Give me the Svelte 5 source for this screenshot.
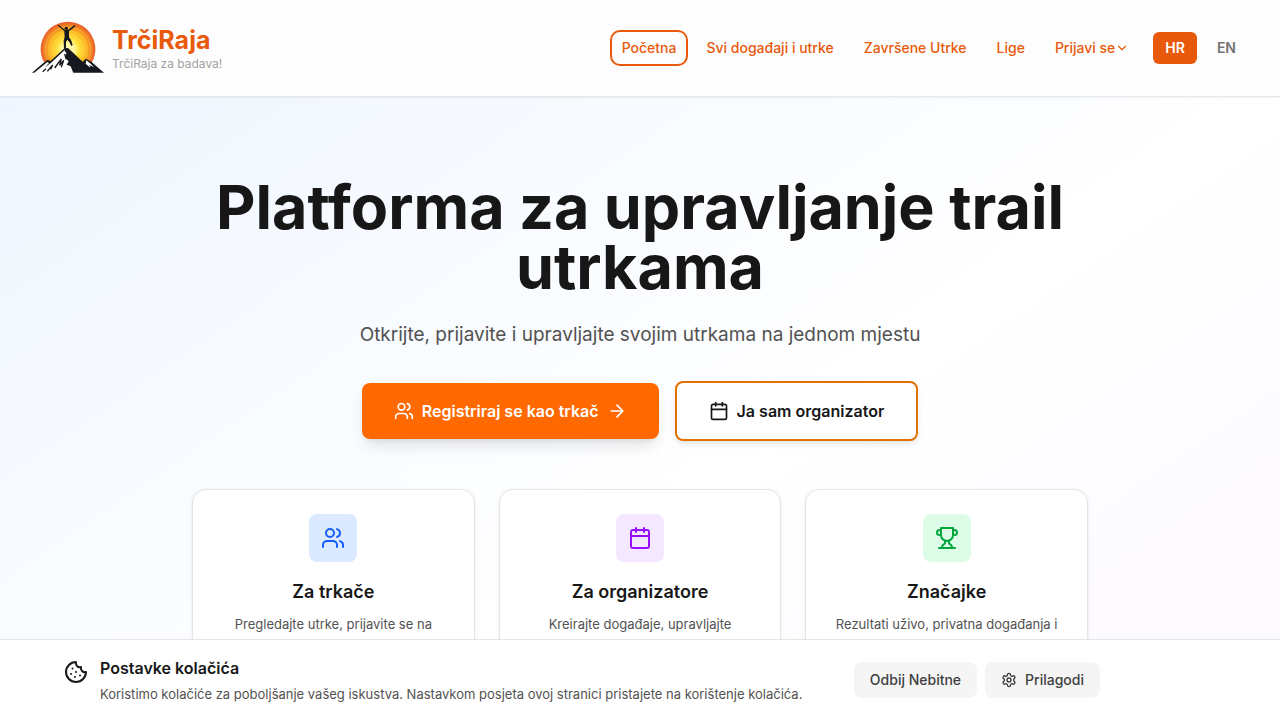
<script>
    const navLinks = ["Svi događaji i utrke", "Završene Utrke", "Lige"];

    const cards = [
        { icon: "users", color: "blue", title: "Za trkače", text: "Pregledajte utrke, prijavite se na" },
        { icon: "calendar", color: "purple", title: "Za organizatore", text: "Kreirajte događaje, upravljajte" },
        { icon: "trophy", color: "green", title: "Značajke", text: "Rezultati uživo, privatna događanja i" }
    ];

    let language = $state("HR");
</script>

{#snippet icon(name, size)}
    <svg class="icon" width={size} height={size} viewBox="0 0 24 24" aria-hidden="true">
        {#if name === "users"}
            <path d="M16 21v-2a4 4 0 0 0-4-4H6a4 4 0 0 0-4 4v2" />
            <circle cx="9" cy="7" r="4" />
            <path d="M22 21v-2a4 4 0 0 0-3-3.87M16 3.13a4 4 0 0 1 0 7.75" />
        {:else if name === "calendar"}
            <path d="M8 2v4M16 2v4M3 10h18" />
            <rect width="18" height="18" x="3" y="4" rx="2" />
        {:else if name === "trophy"}
            <path d="M6 9H4.5a2.5 2.5 0 0 1 0-5H6M18 9h1.5a2.5 2.5 0 0 0 0-5H18M4 22h16" />
            <path d="M10 14.66V17c0 .55-.47.98-.97 1.21C7.85 18.75 7 20.24 7 22M14 14.66V17c0 .55.47.98.97 1.21C16.15 18.75 17 20.24 17 22" />
            <path d="M18 2H6v7a6 6 0 0 0 12 0V2Z" />
        {:else if name === "arrow"}
            <path d="M5 12h14M12 5l7 7-7 7" />
        {:else if name === "chevron"}
            <path d="m6 9 6 6 6-6" />
        {:else if name === "cookie"}
            <path d="M12 2a10 10 0 1 0 10 10 4 4 0 0 1-5-5 4 4 0 0 1-5-5" />
            <path d="M8.5 8.5v.01M16 15.5v.01M12 12v.01M11 17v.01M7 14v.01" />
        {:else if name === "settings"}
            <path d="M12.22 2h-.44a2 2 0 0 0-2 2v.18a2 2 0 0 1-1 1.73l-.43.25a2 2 0 0 1-2 0l-.15-.08a2 2 0 0 0-2.73.73l-.22.38a2 2 0 0 0 .73 2.73l.15.1a2 2 0 0 1 1 1.72v.51a2 2 0 0 1-1 1.74l-.15.09a2 2 0 0 0-.73 2.73l.22.38a2 2 0 0 0 2.73.73l.15-.08a2 2 0 0 1 2 0l.43.25a2 2 0 0 1 1 1.73V20a2 2 0 0 0 2 2h.44a2 2 0 0 0 2-2v-.18a2 2 0 0 1 1-1.73l.43-.25a2 2 0 0 1 2 0l.15.08a2 2 0 0 0 2.73-.73l.22-.39a2 2 0 0 0-.73-2.73l-.15-.08a2 2 0 0 1-1-1.74v-.5a2 2 0 0 1 1-1.74l.15-.09a2 2 0 0 0 .73-2.73l-.22-.38a2 2 0 0 0-2.73-.73l-.15.08a2 2 0 0 1-2 0l-.43-.25a2 2 0 0 1-1-1.73V4a2 2 0 0 0-2-2z" />
            <circle cx="12" cy="12" r="3" />
        {/if}
    </svg>
{/snippet}

<header>
    <a class="brand" href="/">
        <svg width="72" height="54" viewBox="36 31 216 162" aria-hidden="true">
            <defs>
                <radialGradient id="sun" cx="144" cy="116" r="84" gradientUnits="userSpaceOnUse">
                    <stop offset="0.2" stop-color="#fff9a8" />
                    <stop offset="0.4" stop-color="#ffe13c" />
                    <stop offset="0.65" stop-color="#fbba20" />
                    <stop offset="0.82" stop-color="#f58a22" />
                    <stop offset="1" stop-color="#e5562c" />
                </radialGradient>
            </defs>
            <path d="M74 158A82 82 0 1 1 214 158Z" fill="url(#sun)" />
            <g fill="none" stroke="#fff1a0" stroke-opacity="0.35" stroke-width="2">
                <path d="M81 146A69 69 0 1 1 207 146" />
                <path d="M93 143A57 57 0 1 1 195 143" />
                <path d="M103 138A46 46 0 1 1 185 138" />
            </g>
            <!-- mountains -->
            <path d="M36 186L62 164 82 148 92 151 134 112 144 112 188 153 198 144 214 153 252 186Z" fill="#15181e" />
            <path d="M42 187L64 169 82 154 87 157 74 171 95 155 133 119 139 127 136 142 146 152 140 162 152 167 160 187Z" fill="#fff" />
            <path d="M199 149L212 159 222 170 208 163 211 171 197 159Z" fill="#fff" />
            <path d="M104 172L124 145 119 164 131 149 124 170M68 183L78 174M82 182L98 163 92 176M134 130L139 146" fill="none" stroke="#15181e" stroke-width="4" />
            <!-- runner on the summit -->
            <circle cx="139" cy="53" r="5" fill="#15181e" />
            <path d="M113 44L133 62 134 78 131 91 132 113 138 113 138 94 142 87 148 94 154 106 158 103 153 88 147 80 147 62 167 46 164 43 145 57H134L116 42Z" fill="#15181e" />
        </svg>
        <span class="brand-text">
            <strong>TrčiRaja</strong>
            <small>TrčiRaja za badava!</small>
        </span>
    </a>

    <nav>
        <a class="active" href="/">Početna</a>
        {#each navLinks as link}
            <a href="/">{link}</a>
        {/each}
        <button class="login">Prijavi se{@render icon("chevron", 14)}</button>
        <div class="languages">
            {#each ["HR", "EN"] as code}
                <button class:selected={language === code} onclick={() => (language = code)}>{code}</button>
            {/each}
        </div>
    </nav>
</header>

<main>
    <div class="hero">
        <h1>Platforma za upravljanje trail utrkama</h1>
        <p class="lead">Otkrijte, prijavite i upravljajte svojim utrkama na jednom mjestu</p>
        <div class="actions">
            <button class="primary">
                {@render icon("users", 20)}
                Registriraj se kao trkač
                {@render icon("arrow", 20)}
            </button>
            <button class="outline">
                {@render icon("calendar", 20)}
                Ja sam organizator
            </button>
        </div>
        <div class="cards">
            {#each cards as card}
                <article>
                    <div class="tile {card.color}">{@render icon(card.icon, 24)}</div>
                    <h3>{card.title}</h3>
                    <p>{card.text}</p>
                </article>
            {/each}
        </div>
    </div>
</main>

<section class="cookies" aria-label="Postavke kolačića">
    <div class="cookies-inner">
        {@render icon("cookie", 24)}
        <div class="cookies-text">
            <h2>Postavke kolačića</h2>
            <p>Koristimo kolačiće za poboljšanje vašeg iskustva. Nastavkom posjeta ovoj stranici pristajete na korištenje kolačića.</p>
        </div>
        <div class="cookies-actions">
            <button>Odbij Nebitne</button>
            <button>{@render icon("settings", 16)} Prilagodi</button>
        </div>
    </div>
</section>

<style>
    :global(body) {
        margin: 0;
        background: white;
        color: #171717;
        font-family: Inter, "Liberation Sans", sans-serif;
    }

    h1, h2, h3, p {
        margin: 0;
    }

    a {
        color: inherit;
        text-decoration: none;
    }

    button {
        border: none;
        background: none;
        color: inherit;
        font-family: inherit;
        cursor: pointer;
    }

    .icon {
        flex: none;
        fill: none;
        stroke: currentColor;
        stroke-width: 2;
        stroke-linecap: round;
        stroke-linejoin: round;
    }

    header {
        position: relative;
        display: flex;
        align-items: center;
        justify-content: space-between;
        height: 96px;
        padding: 0 32px;
        border-bottom: 1px solid #e5e7eb;
        background: #fdfdfd;
        box-shadow: 0 1px 2px rgba(0, 0, 0, 0.06);
    }

    .brand {
        display: flex;
        align-items: center;
        gap: 8px;
    }

    .brand-text {
        display: flex;
        flex-direction: column;
    }

    .brand strong {
        color: #e8590c;
        font-size: 25px;
        line-height: 32px;
    }

    .brand small {
        color: #a3a3a3;
        font-size: 12px;
        line-height: 16px;
    }

    nav {
        display: flex;
        align-items: center;
        gap: 6px;
        color: #e8590c;
    }

    nav a, .login {
        padding: 6px 10px;
        border: 2px solid transparent;
        border-radius: 10px;
        font-size: 14px;
        font-weight: 500;
        line-height: 20px;
    }

    nav .active {
        border-color: #e8590c;
    }

    .login {
        display: flex;
        align-items: center;
    }

    .languages {
        display: flex;
        gap: 8px;
        margin-left: 6px;
    }

    .languages button {
        padding: 6px 12px;
        border-radius: 6px;
        color: #737373;
        font-size: 14px;
        font-weight: 600;
        line-height: 20px;
    }

    .languages .selected {
        background: #e8590c;
        color: white;
    }

    main {
        padding: 80px 32px 320px;
        background: linear-gradient(to bottom right, #eff6ff, #ffffff, #faf5ff);
    }

    .hero {
        max-width: 896px;
        margin: auto;
        text-align: center;
    }

    h1 {
        margin-bottom: 24px;
        font-size: 61px;
        font-weight: 700;
        line-height: 60px;
    }

    .lead {
        margin-bottom: 32px;
        color: #525252;
        font-size: 19px;
        line-height: 28px;
    }

    .actions {
        display: flex;
        align-items: center;
        justify-content: center;
        gap: 16px;
        margin-bottom: 48px;
    }

    .actions button {
        display: flex;
        align-items: center;
        gap: 8px;
        padding: 16px 32px;
        border-radius: 8px;
        font-size: 16px;
        font-weight: 600;
        line-height: 24px;
    }

    .actions .primary {
        background: #ff6900;
        color: white;
        box-shadow: 0 10px 15px -3px rgba(0, 0, 0, 0.1), 0 4px 6px -4px rgba(0, 0, 0, 0.1);
    }

    .actions .outline {
        border: 2px solid #e17100;
        background: white;
        box-shadow: 0 4px 6px -1px rgba(0, 0, 0, 0.1);
    }

    .cards {
        display: grid;
        grid-template-columns: repeat(3, 1fr);
        gap: 24px;
    }

    article {
        padding: 24px;
        border: 1px solid #e5e5e5;
        border-radius: 14px;
        background: white;
        box-shadow: 0 1px 3px rgba(0, 0, 0, 0.1);
    }

    .tile {
        display: flex;
        align-items: center;
        justify-content: center;
        width: 48px;
        height: 48px;
        margin: 0 auto 16px;
        border-radius: 8px;
    }

    .blue {
        background: #dbeafe;
        color: #155dfc;
    }

    .purple {
        background: #f3e8ff;
        color: #9810fa;
    }

    .green {
        background: #dcfce7;
        color: #00a63e;
    }

    h3 {
        margin-bottom: 8px;
        font-size: 18px;
        font-weight: 600;
        line-height: 28px;
    }

    article p {
        color: #525252;
        font-size: 13px;
        line-height: 20px;
    }

    .cookies {
        position: fixed;
        right: 0;
        bottom: 0;
        left: 0;
        padding: 16px 64px;
        border-top: 1px solid #e5e5e5;
        background: white;
    }

    .cookies-inner {
        display: flex;
        align-items: center;
        gap: 12px;
    }

    .cookies-inner > :global(.icon) {
        align-self: flex-start;
        margin-top: 4px;
    }

    .cookies-text {
        flex: 1;
    }

    h2 {
        margin-bottom: 4px;
        font-size: 16px;
        font-weight: 600;
        line-height: 24px;
    }

    .cookies-text p {
        color: #525252;
        font-size: 13px;
        line-height: 20px;
    }

    .cookies-actions {
        display: flex;
        gap: 8px;
        margin-right: 116px;
    }

    .cookies-actions button {
        display: flex;
        align-items: center;
        gap: 8px;
        padding: 8px 16px;
        border-radius: 8px;
        background: #f5f5f5;
        color: #404040;
        font-size: 14px;
        font-weight: 500;
        line-height: 20px;
        white-space: nowrap;
    }
</style>
